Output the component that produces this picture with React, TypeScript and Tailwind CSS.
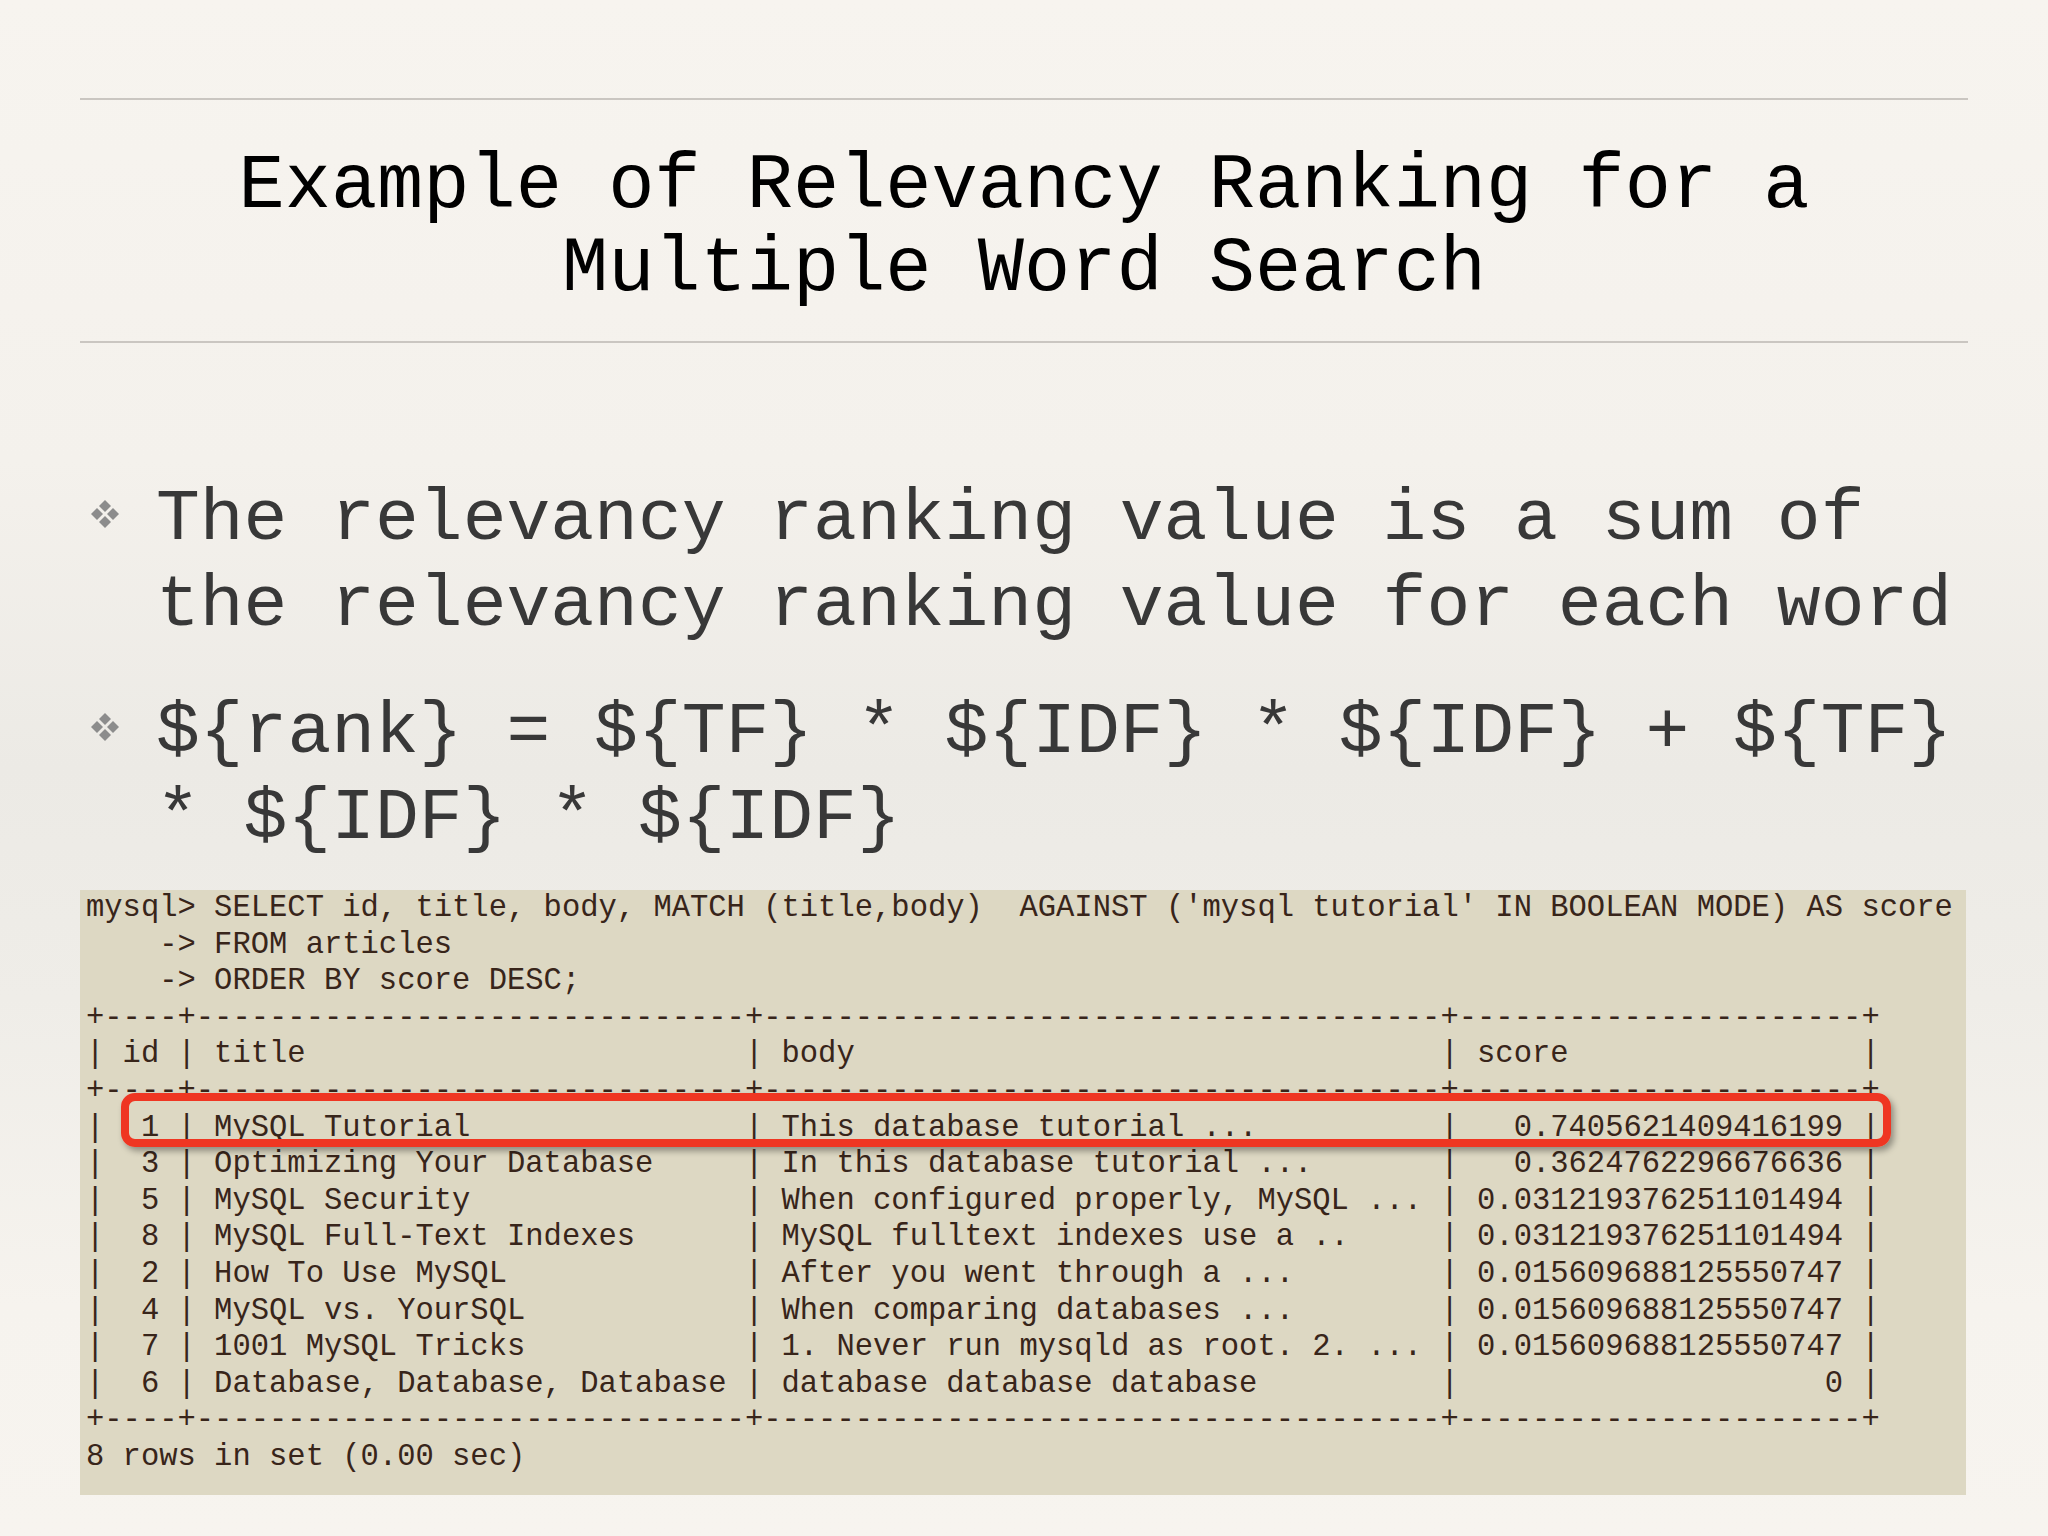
import React from "react";

const sep =
  "+" + "-".repeat(4) + "+" + "-".repeat(30) + "+" + "-".repeat(37) + "+" + "-".repeat(22) + "+";

function row(id: string, title: string, body: string, score: string, header = false) {
  return (
    "| " +
    id.padStart(2) +
    " | " +
    title.padEnd(28) +
    " | " +
    body.padEnd(35) +
    " | " +
    (header ? score.padEnd(20) : score.padStart(20)) +
    " |"
  );
}

const data: [string, string, string, string][] = [
  ["1", "MySQL Tutorial", "This database tutorial ...", "0.7405621409416199"],
  ["3", "Optimizing Your Database", "In this database tutorial ...", "0.3624762296676636"],
  ["5", "MySQL Security", "When configured properly, MySQL ...", "0.031219376251101494"],
  ["8", "MySQL Full-Text Indexes", "MySQL fulltext indexes use a ..", "0.031219376251101494"],
  ["2", "How To Use MySQL", "After you went through a ...", "0.015609688125550747"],
  ["4", "MySQL vs. YourSQL", "When comparing databases ...", "0.015609688125550747"],
  ["7", "1001 MySQL Tricks", "1. Never run mysqld as root. 2. ...", "0.015609688125550747"],
  ["6", "Database, Database, Database", "database database database", "0"],
];

const lines: string[] = [
  "mysql> SELECT id, title, body, MATCH (title,body)  AGAINST ('mysql tutorial' IN BOOLEAN MODE) AS score",
  "    -> FROM articles",
  "    -> ORDER BY score DESC;",
  sep,
  row("id", "title", "body", "score", true),
  sep,
  ...data.map((d) => row(d[0], d[1], d[2], d[3])),
  sep,
  "8 rows in set (0.00 sec)",
];

function Diamonds() {
  return (
    <svg width="32" height="30" viewBox="0 0 32 30" className="block">
      <g fill="#8c8c8c">
        <polygon points="16,1 22,7 16,13 10,7" />
        <polygon points="8,9 14,15 8,21 2,15" />
        <polygon points="24,9 30,15 24,21 18,15" />
        <polygon points="16,17 22,23 16,29 10,23" />
      </g>
    </svg>
  );
}

export default function App() {
  return (
    <div className="w-[2048px] h-[1536px] overflow-hidden bg-[linear-gradient(180deg,#f7f4ef_0%,#f4f1ec_30%,#eceae5_50%,#efede8_65%,#f6f3ee_85%,#f7f4ef_100%)] font-['Liberation_Mono',monospace]">
      <div className="mx-[80px] pt-[98px]">
        <div className="h-[2px] bg-[#cac6c1]" />
        <h1 className="mt-[45px] text-center text-[77px] leading-[83px] text-black font-normal">
          Example of Relevancy Ranking for a
          <br />
          Multiple Word Search
        </h1>
        <div className="mt-[30px] h-[2px] bg-[#cac6c1]" />
      </div>

      <ul className="mt-[134px] ml-[80px] text-[73px] leading-[86px] text-[#383838]">
        <li className="flex">
          <div className="w-[76px] shrink-0 pl-[9px] pt-[22px]">
            <Diamonds />
          </div>
          <div className="whitespace-pre">
            The relevancy ranking value is a sum of
            <br />
            the relevancy ranking value for each word
          </div>
        </li>
        <li className="mt-[41px] flex">
          <div className="w-[76px] shrink-0 pl-[9px] pt-[22px]">
            <Diamonds />
          </div>
          <div className="whitespace-pre">
            {"${rank} = ${TF} * ${IDF} * ${IDF} + ${TF}"}
            <br />
            {"* ${IDF} * ${IDF}"}
          </div>
        </li>
      </ul>

      <div className="relative mt-[28px] ml-[80px] h-[605px] w-[1886px] bg-[#ddd8c3] pl-[6px]">
        <pre className="m-0 font-['Liberation_Mono',monospace] text-[30.5px] leading-[36.6px] text-[#38251a] whitespace-pre">
          {lines.join("\n")}
        </pre>
        <div className="absolute left-[41px] top-[203px] h-[54px] w-[1770px] rounded-[14px] border-[8px] border-[#ef3622] shadow-[3px_4px_6px_rgba(0,0,0,0.35)]" />
      </div>
    </div>
  );
}
